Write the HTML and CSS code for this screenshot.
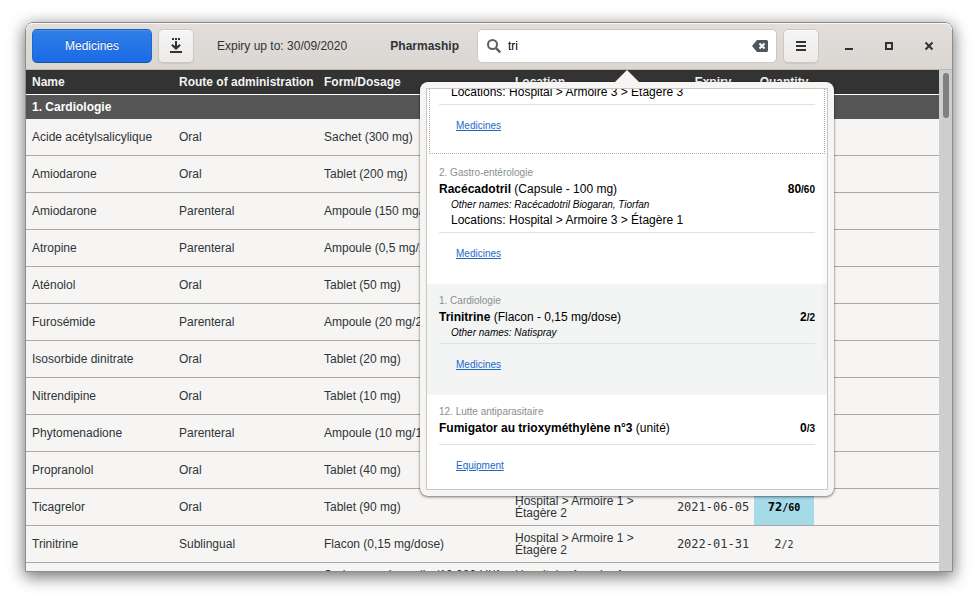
FILE: index.html
```html
<!DOCTYPE html>
<html lang="en">
<head>
<meta charset="utf-8">
<title>Pharmaship</title>
<link rel="stylesheet" href="styles.css">
</head>
<body>
<div class="window">
  <header class="headerbar">
    <button class="btn btn-primary" type="button">Medicines</button>
    <button class="btn btn-icon" type="button" aria-label="Export">
      <svg width="16" height="16" viewBox="0 0 16 16" fill="#2e3436"><path d="M4 0h2v2H4zM7 0h2v2H7zM10 0h2v2h-2zM7 3h2v5l2.500-2 1.300 1.500L8 12 3.200 7.500 4.500 6 7 8zM2 13h12v2H2z"/></svg>
    </button>
    <span class="expiry-label">Expiry up to: 30/09/2020</span>
    <h1 class="title">Pharmaship</h1>
    <div class="search-wrap">
      <label class="search">
        <svg width="16" height="16" viewBox="0 0 16 16" fill="none" stroke="#5b6163"><circle cx="6.500" cy="6.500" r="4.500" stroke-width="2"/><path d="M9.800 9.800l4.500 4.500" stroke-width="2.400"/></svg>
        <input type="text" value="tri" aria-label="Search">
        <svg width="16" height="16" viewBox="0 0 16 16"><path d="M5 2h9.500A1.500 1.500 0 0 1 16 3.500v9a1.500 1.500 0 0 1-1.500 1.500H5L0 8z" fill="#50575a"/><path d="M7.500 5.500l5 5M12.500 5.500l-5 5" stroke="#fff" stroke-width="2"/></svg>
      </label>
      <section class="popover" aria-label="Search results">
        <div class="results">
          <article class="result result-focus">
            <p class="locations">Locations: Hospital &gt; Armoire 3 &gt; Étagère 3</p>
            <div class="links"><a href="#">Medicines</a></div>
          </article>
          <article class="result">
            <p class="category">2. Gastro-entérologie</p>
            <div class="item"><span><b>Racécadotril</b> (Capsule - 100 mg)</span><b>80<small>/60</small></b></div>
            <p class="others">Other names: Racécadotril Biogaran, Tiorfan</p>
            <p class="locations">Locations: Hospital &gt; Armoire 3 &gt; Étagère 1</p>
            <div class="links"><a href="#">Medicines</a></div>
          </article>
          <article class="result result-hover">
            <p class="category">1. Cardiologie</p>
            <div class="item"><span><b>Trinitrine</b> (Flacon - 0,15 mg/dose)</span><b>2<small>/2</small></b></div>
            <p class="others">Other names: Natispray</p>
            <div class="links"><a href="#">Medicines</a></div>
          </article>
          <article class="result">
            <p class="category">12. Lutte antiparasitaire</p>
            <div class="item item-only"><span><b>Fumigator au trioxyméthylène n°3</b> (unité)</span><b>0<small>/3</small></b></div>
            <div class="links"><a href="#">Equipment</a></div>
          </article>
        </div>
      </section>
    </div>
    <button class="btn btn-icon" type="button" aria-label="Menu">
      <svg width="16" height="16" viewBox="0 0 16 16" fill="#2e3436"><path d="M3 3h10v2H3zM3 7h10v2H3zM3 11h10v2H3z"/></svg>
    </button>
    <div class="controls">
      <button type="button" aria-label="Minimize"><svg width="16" height="16" viewBox="0 0 16 16" fill="#2e3436"><path d="M4 10h8v2H4z"/></svg></button>
      <button type="button" aria-label="Maximize"><svg width="16" height="16" viewBox="0 0 16 16" fill="none" stroke="#2e3436" stroke-width="2"><path d="M5 5h6v6H5z"/></svg></button>
      <button type="button" aria-label="Close"><svg width="16" height="16" viewBox="0 0 16 16" fill="none" stroke="#2e3436" stroke-width="2"><path d="M4.500 4.500l7 7M11.500 4.500l-7 7"/></svg></button>
    </div>
  </header>
  <main class="content">
    <div class="list">
      <table>
        <colgroup><col class="c-name"><col class="c-route"><col class="c-form"><col class="c-loc"><col class="c-exp"><col class="c-qty"><col></colgroup>
        <thead><tr><th>Name</th><th>Route of administration</th><th>Form/Dosage</th><th>Location</th><th class="center">Expiry</th><th class="center">Quantity</th><th></th></tr></thead>
        <tbody>
          <tr class="group"><th colspan="7">1. Cardiologie</th></tr>
          <tr><td>Acide acétylsalicylique</td><td>Oral</td><td>Sachet (300 mg)</td><td></td><td></td><td></td><td></td></tr>
          <tr><td>Amiodarone</td><td>Oral</td><td>Tablet (200 mg)</td><td></td><td></td><td></td><td></td></tr>
          <tr><td>Amiodarone</td><td>Parenteral</td><td>Ampoule (150 mg/3 mL)</td><td></td><td></td><td></td><td></td></tr>
          <tr><td>Atropine</td><td>Parenteral</td><td>Ampoule (0,5 mg/1 mL)</td><td></td><td></td><td></td><td></td></tr>
          <tr><td>Aténolol</td><td>Oral</td><td>Tablet (50 mg)</td><td></td><td></td><td></td><td></td></tr>
          <tr><td>Furosémide</td><td>Parenteral</td><td>Ampoule (20 mg/2 mL)</td><td></td><td></td><td></td><td></td></tr>
          <tr><td>Isosorbide dinitrate</td><td>Oral</td><td>Tablet (20 mg)</td><td></td><td></td><td></td><td></td></tr>
          <tr><td>Nitrendipine</td><td>Oral</td><td>Tablet (10 mg)</td><td></td><td></td><td></td><td></td></tr>
          <tr><td>Phytomenadione</td><td>Parenteral</td><td>Ampoule (10 mg/1 mL)</td><td></td><td></td><td></td><td></td></tr>
          <tr><td>Propranolol</td><td>Oral</td><td>Tablet (40 mg)</td><td></td><td></td><td></td><td></td></tr>
          <tr><td>Ticagrelor</td><td>Oral</td><td>Tablet (90 mg)</td><td>Hospital &gt; Armoire 1 &gt; Étagère 2</td><td class="mono">2021-06-05</td><td class="mono over">72<small>/60</small></td><td></td></tr>
          <tr><td>Trinitrine</td><td>Sublingual</td><td>Flacon (0,15 mg/dose)</td><td>Hospital &gt; Armoire 1 &gt; Étagère 2</td><td class="mono">2022-01-31</td><td class="mono">2<small>/2</small></td><td></td></tr>
          <tr><td></td><td></td><td>Seringue préremplie (10 000 UI/1 mL)</td><td>Hospital &gt; Armoire 1 &gt; Étagère 2</td><td></td><td></td><td></td></tr>
        </tbody>
      </table>
    </div>
    <div class="scrollbar"><div class="thumb"></div></div>
  </main>
</div>
</body>
</html>
```
FILE: styles.css
```css
* { box-sizing: border-box; }
body {
  margin: 0;
  padding: 22px 25px 28px;
  height: 100vh;
  overflow: hidden;
  background: #fff;
  color: #2e3436;
  font: 12px/12px "Liberation Sans", Arial, sans-serif;
}
p, h1 { margin: 0; }
button, input { font: inherit; color: inherit; }
svg { display: block; flex: none; }
small { font-size: 10px; line-height: 1; }

.window {
  display: flex;
  flex-direction: column;
  height: 100%;
  border: 1px solid #8c8c8b;
  border-radius: 8px 8px 0 0;
  box-shadow: 0 4px 16px 1px rgba(0, 0, 0, .55);
}

/* Header bar */
.headerbar {
  display: flex;
  align-items: center;
  flex: none;
  height: 47px;
  padding: 0 6px;
  border-bottom: 1px solid #bfb8b1;
  border-radius: 7px 7px 0 0;
  background: linear-gradient(#e1dedb, #dad6d2);
  box-shadow: inset 0 1px #f9f8f7;
}
.btn {
  display: flex;
  align-items: center;
  justify-content: center;
  height: 34px;
  padding: 0;
  border: 1px solid #cdc7c2;
  border-radius: 5px;
  background: linear-gradient(#f6f5f4, #edebe9);
  box-shadow: inset 0 1px #fff, 0 1px 1px rgba(0, 0, 0, .07);
}
.btn-primary {
  width: 120px;
  margin-right: 6px;
  border-color: #185fb4 #1b6acb #15539e;
  background: linear-gradient(#2f7fe8, #1c6ae6);
  box-shadow: inset 0 1px #4a90ec;
  color: #fff;
  text-shadow: 0 -1px rgba(0, 0, 0, .3);
}
.btn-icon { width: 36px; }
.expiry-label { margin-left: 23px; white-space: nowrap; }
.title {
  flex: 1;
  padding: 0 18px;
  font-size: 12px;
  text-align: right;
}
.search-wrap { position: relative; width: 300px; margin-right: 6px; }
.search {
  display: flex;
  align-items: center;
  gap: 6px;
  height: 34px;
  padding: 0 8px;
  border: 1px solid #cdc7c2;
  border-radius: 5px;
  background: #fff;
}
.search input {
  flex: 1;
  min-width: 0;
  padding: 0;
  border: 0;
  outline: 0;
  background: none;
  color: #000;
}
.controls { display: flex; gap: 16px; margin-left: 18px; margin-right: 5px; }
.controls button {
  width: 24px;
  padding: 4px;
  border: 0;
  background: none;
}

/* Medicine list */
.content { display: flex; flex: 1; min-height: 0; background: #f6f5f4; }
.list { flex: 1; overflow: hidden; }
table { width: 100%; border-collapse: separate; border-spacing: 0; table-layout: fixed; }
.c-name { width: 147px; }
.c-route { width: 145px; }
.c-form { width: 191px; }
.c-loc { width: 163px; }
.c-exp { width: 82px; }
.c-qty { width: 60px; }
th, td { padding: 0 6px; text-align: left; }
td { height: 37px; border-bottom: 1px solid #a9a9a7; }
th { height: 25px; background: #333; color: #f2f2f2; white-space: nowrap; }
thead th { border-bottom: 1px solid #fff; }
.group th { height: 24px; background: #555; color: #fff; }
th.center { padding: 0; text-align: center; }
.mono { padding: 0; font-family: "DejaVu Sans Mono", monospace; text-align: center; }
.over { background: #a5dae8; color: #000; font-weight: bold; }
.scrollbar { flex: none; width: 13px; padding: 3px 3px 0 4px; background: #cecece; }
.thumb { height: 45px; border-radius: 3px; background: #7e8182; }

/* Search results popover */
.popover {
  position: absolute;
  z-index: 2;
  top: 53px;
  right: -57px;
  width: 414px;
  padding: 6px;
  border-radius: 8px;
  background: #f6f5f4;
  box-shadow: 0 1px 3px rgba(0, 0, 0, .5), 0 0 1px rgba(0, 0, 0, .5);
  color: #000;
}
.popover::before {
  content: "";
  position: absolute;
  top: -12px;
  left: 195px;
  border: solid transparent;
  border-width: 0 12px 12px;
  border-bottom-color: #f6f5f4;
}
/* Faint overlay scrollbar */
.popover::after {
  content: "";
  position: absolute;
  top: 7px;
  right: 7px;
  width: 4px;
  height: 271px;
  background: rgba(0, 0, 0, .02);
}
.results {
  display: flex;
  flex-direction: column;
  justify-content: flex-end;
  height: 402px;
  overflow: hidden;
  border: 1px solid #cdc7c2;
  background: #fff;
}
.result { flex: none; padding: 9px 12px; line-height: 16px; }
.result-focus { outline: 1px dotted #b4b4b4; outline-offset: -3px; }
.result-hover { background: #f3f5f5; }
.result:last-child { padding-bottom: 2px; }
.category { color: #8b8e8f; font-size: 10px; }
.item { display: flex; justify-content: space-between; }
.item-only { padding-bottom: 5px; }
.others { padding-left: 12px; font-size: 10px; font-style: italic; line-height: 15px; }
.locations { padding-left: 12px; line-height: 17px; }
.links {
  margin-top: 3px;
  padding: 13px 17px;
  border-top: 1px solid #e1e1e1;
  font-size: 10px;
}
.links a { color: #1b6acb; }
```
